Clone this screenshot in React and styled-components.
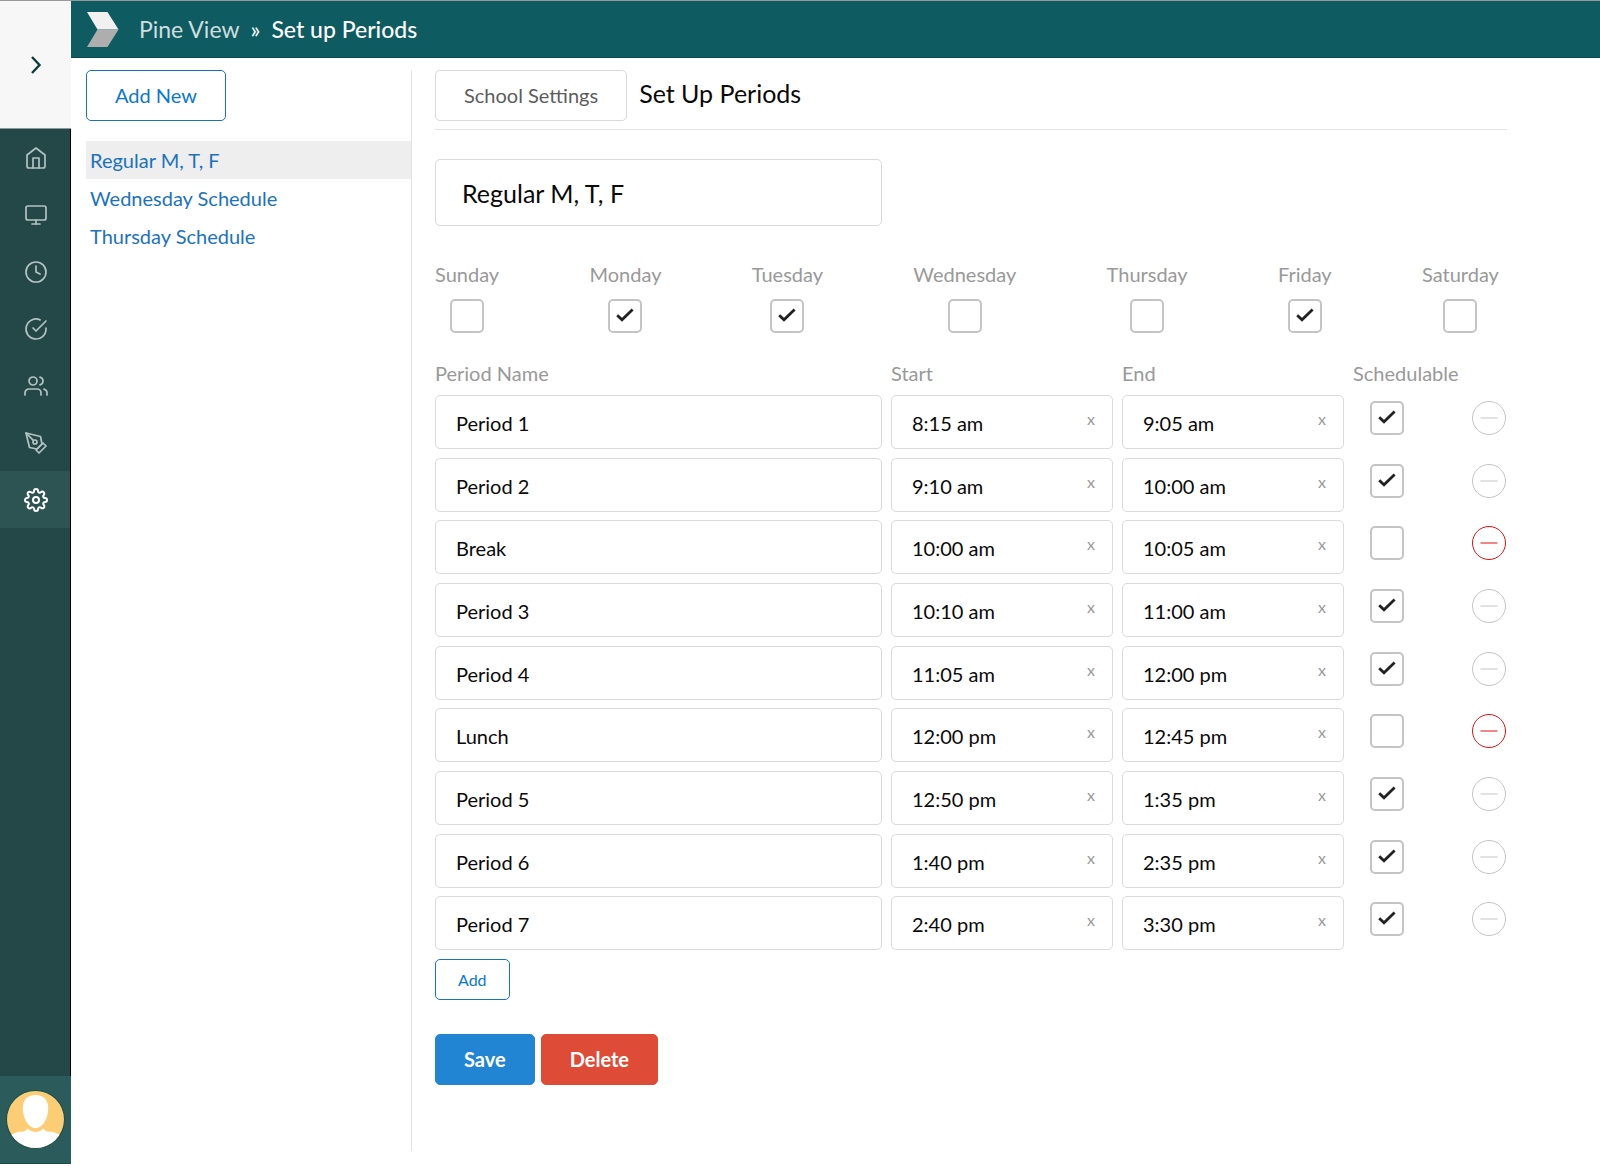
import React, { useState } from 'react'
import styled, { createGlobalStyle, css } from 'styled-components'
import {
    FiHome,
    FiMonitor,
    FiClock,
    FiCheckCircle,
    FiUsers,
    FiPenTool,
    FiSettings
} from 'react-icons/fi'

const navItems = [
    { label: 'Home', Icon: FiHome },
    { label: 'Displays', Icon: FiMonitor },
    { label: 'Time', Icon: FiClock },
    { label: 'Attendance', Icon: FiCheckCircle },
    { label: 'People', Icon: FiUsers },
    { label: 'Design', Icon: FiPenTool },
    { label: 'Settings', Icon: FiSettings, active: true }
]

const schedules = ['Regular M, T, F', 'Wednesday Schedule', 'Thursday Schedule']

const initialDays = [
    { name: 'Sunday', on: false },
    { name: 'Monday', on: true },
    { name: 'Tuesday', on: true },
    { name: 'Wednesday', on: false },
    { name: 'Thursday', on: false },
    { name: 'Friday', on: true },
    { name: 'Saturday', on: false }
]

const initialPeriods = [
    { id: 1, name: 'Period 1', start: '8:15 am', end: '9:05 am', schedulable: true },
    { id: 2, name: 'Period 2', start: '9:10 am', end: '10:00 am', schedulable: true },
    { id: 3, name: 'Break', start: '10:00 am', end: '10:05 am', schedulable: false },
    { id: 4, name: 'Period 3', start: '10:10 am', end: '11:00 am', schedulable: true },
    { id: 5, name: 'Period 4', start: '11:05 am', end: '12:00 pm', schedulable: true },
    { id: 6, name: 'Lunch', start: '12:00 pm', end: '12:45 pm', schedulable: false },
    { id: 7, name: 'Period 5', start: '12:50 pm', end: '1:35 pm', schedulable: true },
    { id: 8, name: 'Period 6', start: '1:40 pm', end: '2:35 pm', schedulable: true },
    { id: 9, name: 'Period 7', start: '2:40 pm', end: '3:30 pm', schedulable: true }
]

const CheckBox = ({ id, label, checked, onChange }) => (
    <CHECKBOX>
        <input id={id} type='checkbox' aria-label={label} checked={checked} onChange={onChange} />
        <svg width='18' height='14' viewBox='0 0 18 14' aria-hidden='true'>
            <path d='M1.2 7.2L6 11.8L16.6 1.6' fill='none' stroke='#222' strokeWidth='2.8' />
        </svg>
    </CHECKBOX>
)

const TimeField = ({ label, value, onChange }) => (
    <TIME>
        <TextInput aria-label={label} value={value} onChange={e => onChange(e.target.value)} />
        <button type='button' aria-label={`Clear ${label}`} onClick={() => onChange('')}>x</button>
    </TIME>
)

const Sidebar = () => (
    <SIDEBAR>
        <Toggle type='button' aria-label='Expand menu'>
            <svg width='12' height='20' viewBox='0 0 12 20' aria-hidden='true'>
                <path d='M2 2L9.5 10L2 18' fill='none' stroke='#0c3c3e' strokeWidth='2.4' />
            </svg>
        </Toggle>
        <Nav>
            {navItems.map(({ label, Icon, active }) => (
                <NavLink key={label} href='#' aria-label={label} $active={active}>
                    <Icon />
                </NavLink>
            ))}
        </Nav>
        <Account href='#' aria-label='Account'>
            <svg width='59' height='59' viewBox='0 0 58 58' aria-hidden='true'>
                <clipPath id='face'>
                    <circle cx='29' cy='29' r='28' />
                </clipPath>
                <circle cx='29' cy='29' r='28.5' fill='#fdcd76' stroke='#0f4f50' />
                <g clipPath='url(#face)' fill='#fff'>
                    <path d='M29 5C37 5 41.5 10 41.5 18C41.5 28 36 37.5 29 37.5C22 37.5 16.5 28 16.5 18C16.5 10 21 5 29 5Z' />
                    <path d='M0 58V48C5 44 10 41 14 41C18 41 19 40.5 21 37.8C23.5 40 26 41.3 29 41.3C32 41.3 34.5 40 37 37.8C39 40.5 40 41 44 41C48 41 53 44 58 48V58Z' />
                </g>
            </svg>
        </Account>
    </SIDEBAR>
)

const Header = () => (
    <HEADER>
        <svg width='32' height='35' viewBox='0 0 32 35' aria-hidden='true'>
            <path d='M0 0H20.5L31.5 17.5H10.5Z' fill='#f1f1f1' />
            <path d='M10.5 17.5H31.5L20.5 35H0Z' fill='#aeaeae' />
        </svg>
        <a href='#'>Pine View</a>
        <span>»</span>
        <strong>Set up Periods</strong>
    </HEADER>
)

const App = () => {
    const [selected, setSelected] = useState(schedules[0])
    const [title, setTitle] = useState(schedules[0])
    const [days, setDays] = useState(initialDays)
    const [periods, setPeriods] = useState(initialPeriods)

    const toggleDay = name => {
        setDays(days.map(day => day.name === name ? { ...day, on: !day.on } : day))
    }

    const update = (id, changes) => {
        setPeriods(periods.map(period => period.id === id ? { ...period, ...changes } : period))
    }

    const addPeriod = () => {
        setPeriods([...periods, { id: Date.now(), name: '', start: '', end: '', schedulable: true }])
    }

    return (
        <PAGE>
            <GlobalStyle />
            <Sidebar />
            <Content>
                <Header />
                <Columns>
                    <Schedules>
                        <Button type='button' $outline>Add New</Button>
                        <ul>
                            {schedules.map(name => (
                                <li key={name}>
                                    <ScheduleLink
                                        href='#'
                                        $active={name === selected}
                                        onClick={() => { setSelected(name); setTitle(name) }}
                                    >
                                        {name}
                                    </ScheduleLink>
                                </li>
                            ))}
                        </ul>
                    </Schedules>
                    <Main>
                        <TitleBar>
                            <Button type='button'>School Settings</Button>
                            <h1>Set Up Periods</h1>
                        </TitleBar>
                        <TitleInput
                            aria-label='Schedule name'
                            value={title}
                            onChange={e => setTitle(e.target.value)}
                        />
                        <Days>
                            {days.map(({ name, on }) => (
                                <Day key={name}>
                                    <label htmlFor={name}>{name}</label>
                                    <CheckBox id={name} checked={on} onChange={() => toggleDay(name)} />
                                </Day>
                            ))}
                        </Days>
                        <Periods>
                            <colgroup>
                                <col />
                                <col className='time' />
                                <col className='time' />
                                <col className='schedulable' />
                                <col className='remove' />
                            </colgroup>
                            <thead>
                                <tr>
                                    <th>Period Name</th>
                                    <th>Start</th>
                                    <th>End</th>
                                    <th>Schedulable</th>
                                    <th aria-label='Remove' />
                                </tr>
                            </thead>
                            <tbody>
                                {periods.map(period => (
                                    <tr key={period.id}>
                                        <td>
                                            <TextInput
                                                aria-label='Period name'
                                                value={period.name}
                                                onChange={e => update(period.id, { name: e.target.value })}
                                            />
                                        </td>
                                        <td>
                                            <TimeField
                                                label={`${period.name} start`}
                                                value={period.start}
                                                onChange={start => update(period.id, { start })}
                                            />
                                        </td>
                                        <td>
                                            <TimeField
                                                label={`${period.name} end`}
                                                value={period.end}
                                                onChange={end => update(period.id, { end })}
                                            />
                                        </td>
                                        <td className='check'>
                                            <CheckBox
                                                label={`${period.name} schedulable`}
                                                checked={period.schedulable}
                                                onChange={() => update(period.id, { schedulable: !period.schedulable })}
                                            />
                                        </td>
                                        <td className='minus'>
                                            <Remove
                                                type='button'
                                                aria-label={`Remove ${period.name}`}
                                                disabled={period.schedulable}
                                                onClick={() => setPeriods(periods.filter(p => p.id !== period.id))}
                                            >
                                                <svg width='34' height='34' viewBox='0 0 34 34' aria-hidden='true'>
                                                    <circle cx='17' cy='17' r='16.5' />
                                                    <path d='M8.5 17H25.5' />
                                                </svg>
                                            </Remove>
                                        </td>
                                    </tr>
                                ))}
                            </tbody>
                        </Periods>
                        <Button type='button' $outline $small onClick={addPeriod}>Add</Button>
                        <Actions>
                            <Button type='submit' $fill='#2185d3'>Save</Button>
                            <Button type='button' $fill='#de4b37'>Delete</Button>
                        </Actions>
                    </Main>
                </Columns>
            </Content>
        </PAGE>
    )
}

export default App

const GlobalStyle = createGlobalStyle`
    * {box-sizing: border-box}

    body {
        margin: 0;
        background: #fff;
        color: #0a0a0a;
        font-family: Lato, 'Liberation Sans', sans-serif;
        font-size: 20px;
        line-height: 24px;
    }
    button, input {
        font: inherit;
    }
    button {
        cursor: pointer;
    }
    a {
        text-decoration: none;
    }
`

const PAGE = styled.div`
    display: flex;
    min-height: 100vh;
    border-top: 1px solid #999;
`

const SIDEBAR = styled.aside`
    display: flex;
    flex-direction: column;
    flex: none;
    width: 71px;
    margin-bottom: 2px;
    background: #244747;
`

const Toggle = styled.button`
    display: flex;
    align-items: center;
    justify-content: center;
    height: 128px;
    padding: 0;
    border: 0;
    border-bottom: 1px solid #8a9a9a;
    background: #f7f7f7;
`

const Nav = styled.nav`
    flex: 1;
    border-right: 1px solid #000;
`

const NavLink = styled.a`
    display: flex;
    align-items: center;
    justify-content: center;
    height: 57px;
    padding-left: 1px;
    color: ${({ $active }) => $active ? '#fff' : '#b3c2c2'};
    background: ${({ $active }) => $active ? '#2e5353' : 'transparent'};

    svg {
        width: 24px;
        height: 24px;
        stroke-width: ${({ $active }) => $active ? 2 : 1.7};
    }
`

const Account = styled.a`
    display: flex;
    justify-content: center;
    padding: 14px 0;
    border-bottom: 1px solid #0f4f50;
    background: #2b5b5b;
`

const Content = styled.div`
    display: flex;
    flex-direction: column;
    flex: 1;
    min-width: 0;
`

const HEADER = styled.header`
    display: flex;
    align-items: center;
    height: 57px;
    padding: 0 16px;
    border-bottom: 1px solid #0a4a50;
    background: #0f5b62;
    color: #fff;
    font-size: 23px;

    a {
        margin-left: 20px;
        color: #cfdedf;
    }
    span {
        margin: 0 11px;
    }
    strong {
        font-weight: 500;
    }
`

const Columns = styled.div`
    display: flex;
    flex: 1;
    padding: 12px 0 15px;
`

const Schedules = styled.section`
    flex: none;
    width: 341px;
    padding-left: 15px;
    border-right: 1px solid #e3e3e3;

    ul {
        margin: 20px 0 0;
        padding: 0;
        list-style: none;
    }
`

const ScheduleLink = styled.a`
    display: block;
    padding: 7px 4px;
    background: ${({ $active }) => $active ? '#eee' : 'transparent'};
    color: #1b72be;
`

const Button = styled.button`
    height: 51px;
    padding: 0 28px 2px;
    border: 1px solid #d9d9d9;
    border-radius: 5px;
    background: #fff;
    color: #5c5c5c;

    ${({ $outline }) => $outline && css`
        border-color: #1573c8;
        color: #0a78d1;
    `}
    ${({ $small }) => $small && css`
        height: 41px;
        padding: 0 22px;
        font-size: 16px;
    `}
    ${({ $fill }) => $fill && css`
        border-color: ${$fill};
        background: ${$fill};
        color: #fff;
        font-weight: 700;
    `}
`

const Main = styled.main`
    flex: 1;
    min-width: 0;
    padding: 0 93px 0 23px;
`

const TitleBar = styled.div`
    display: flex;
    gap: 12px;
    padding-bottom: 8px;
    border-bottom: 1px solid #e3e3e3;

    h1 {
        margin: 7px 0 0;
        font-size: 25px;
        font-weight: 400;
        line-height: 32px;
    }
`

const TextInput = styled.input`
    display: block;
    width: 100%;
    height: 54px;
    padding: 2px 20px 0;
    border: 1px solid #dadada;
    border-radius: 5px;
    background: #fff;
    color: #0a0a0a;
`

const TitleInput = styled(TextInput)`
    width: calc(100% * 5 / 12);
    height: 67px;
    margin-top: 29px;
    padding: 0 26px;
    font-size: 25px;
`

const Days = styled.div`
    display: flex;
    justify-content: space-between;
    margin: 36px 8px 28px 0;
`

const Day = styled.div`
    display: flex;
    flex-direction: column;
    align-items: center;
    gap: 13px;
    color: #999;
`

const CHECKBOX = styled.span`
    position: relative;
    display: block;
    width: 34px;
    height: 34px;

    input {
        display: block;
        width: 34px;
        height: 34px;
        margin: 0;
        border: 2px solid #c4c4c4;
        border-radius: 5px;
        appearance: none;
        background: #fff;
        cursor: pointer;
    }
    svg {
        position: absolute;
        top: 9px;
        left: 8px;
        display: none;
        pointer-events: none;
    }
    input:checked + svg {
        display: block;
    }
`

/* the height is a minimum that the rows share out between them */
const Periods = styled.table`
    width: 100%;
    height: 598px;
    border-spacing: 0;
    table-layout: fixed;

    .time {width: 231px}
    .schedulable {width: 119px}
    .remove {width: 35px}

    th {
        height: 34px;
        padding: 0 0 10px;
        color: #999;
        font-weight: 400;
        text-align: left;
    }
    td {
        height: 62px;
        padding: 0 9px 8px 0;
        vertical-align: top;
    }
    .check {
        padding: 6px 0 0 17px;
    }
    .minus {
        padding: 6px 0 0;
    }
`

const TIME = styled.div`
    position: relative;

    button {
        position: absolute;
        top: 12px;
        right: 17px;
        padding: 0 1px;
        border: 0;
        background: none;
        color: #999;
        font-size: 16px;
    }
`

const Remove = styled.button`
    display: block;
    padding: 0;
    border: 0;
    background: none;
    color: #dd1111;

    &:disabled {
        color: #c4c4c4;
        cursor: default;
    }
    svg {
        display: block;
        fill: none;
        stroke: currentColor;
    }
`

const Actions = styled.div`
    display: flex;
    gap: 6px;
    margin-top: 34px;
`
